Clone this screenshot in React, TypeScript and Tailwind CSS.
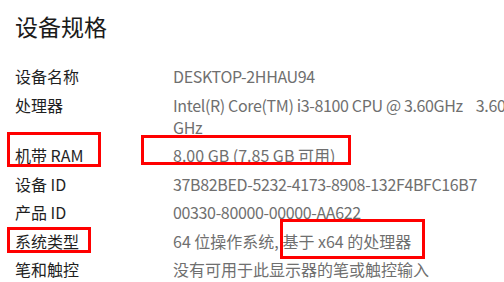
import React from 'react';

const font = { fontFamily: '"Noto Sans CJK SC", "Noto Sans", sans-serif' };

interface Spec {
  label: string;
  value: React.ReactNode;
  tight?: boolean;
}

const specs: Spec[] = [
  { label: '设备名称', value: 'DESKTOP-2HHAU94', tight: true },
  {
    label: '处理器',
    tight: true,
    value: (
      <>
        <span className="whitespace-nowrap">
          Intel(R) Core(TM) i3-8100 CPU @ 3.60GHz<span className="ml-[13px]">3.60</span>
        </span>
        <br />
        GHz
      </>
    ),
  },
  { label: '机带 RAM', value: '8.00 GB (7.85 GB 可用)' },
  { label: '设备 ID', value: '37B82BED-5232-4173-8908-132F4BFC16B7', tight: true },
  { label: '产品 ID', value: '00330-80000-00000-AA622', tight: true },
  { label: '系统类型', value: '64 位操作系统, 基于 x64 的处理器' },
  { label: '笔和触控', value: '没有可用于此显示器的笔或触控输入' },
];

// red annotation boxes drawn over the screenshot
const marks = [
  'left-[7px] top-[132px] w-[94px] h-[35px]',
  'left-[141px] top-[135px] w-[210px] h-[30px]',
  'left-[7px] top-[227px] w-[84px] h-[26px]',
  'left-[280px] top-[219px] w-[145px] h-[40px]',
];

export default function App() {
  return (
    <div className="relative w-[504px] h-[282px] overflow-hidden bg-white" style={font}>
      <div className="pl-[15px] pt-[11px]">
        <h1 className="text-[23px] leading-[30px] font-normal text-[#1b1b1b]">设备规格</h1>
        <div className="mt-[24px] flex flex-col gap-[6.5px] text-[16px] leading-[22px]">
          {specs.map((s) => (
            <div key={s.label} className="flex">
              <div className="w-[158px] shrink-0 text-[#1f1f1f]">{s.label}</div>
              <div
                className={`text-[#6f6f6f] whitespace-nowrap ${s.tight ? 'tracking-[-0.35px]' : ''}`}
              >
                {s.value}
              </div>
            </div>
          ))}
        </div>
      </div>
      {marks.map((m) => (
        <div key={m} className={`absolute border-[3px] border-[#ff0000] ${m}`} />
      ))}
    </div>
  );
}
